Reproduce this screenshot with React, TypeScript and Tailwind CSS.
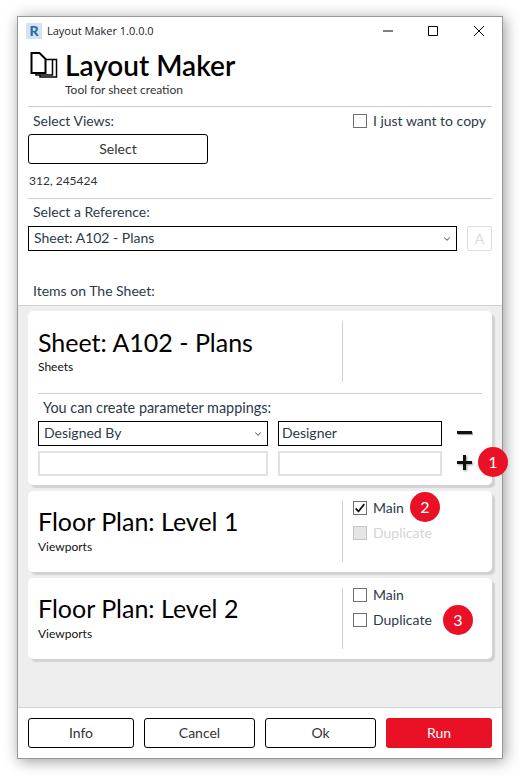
import { ChevronDown } from "lucide-react";

const font = { fontFamily: "Lato, 'Liberation Sans', sans-serif" };

function Checkbox({ label, checked, disabled }: { label: string; checked?: boolean; disabled?: boolean }) {
  return (
    <div className={`flex items-center gap-[6px] text-sm leading-[18px] ${disabled ? "text-[#d4d4d4]" : "text-[#2b3a4a]"}`}>
      <span
        className={`flex h-[14px] w-[14px] items-center justify-center border ${
          disabled ? "border-[#c4c4c4] bg-[#e6e6e6]" : "border-[#707070] bg-white"
        }`}
      >
        {checked && (
          <svg viewBox="0 0 14 14" className="h-[12px] w-[12px]">
            <path d="M2 7.500 5.200 11 12 2.500" fill="none" stroke="#111" strokeWidth="2" />
          </svg>
        )}
      </span>
      <span>{label}</span>
    </div>
  );
}

function Dropdown({ label, className }: { label: string; className: string }) {
  return (
    <div className={`flex h-[25px] items-center justify-between border-[1.5px] border-black pl-[5px] pr-[4px] text-sm text-[#2b3a4a] ${className}`}>
      <span className="pb-[2px]">{label}</span>
      <ChevronDown className="h-[10px] w-[10px] text-[#666]" strokeWidth={2.5} />
    </div>
  );
}

function Badge({ n, className }: { n: number; className: string }) {
  return (
    <span className={`absolute flex h-[30px] w-[30px] items-center justify-center rounded-full bg-[#ea1126] text-base text-white ${className}`}>
      {n}
    </span>
  );
}

function FooterButton({ label, className }: { label: string; className: string }) {
  return (
    <button className={`h-[30px] rounded-[3px] border border-black text-sm text-[#333] ${className}`}>{label}</button>
  );
}

function ViewCard({ title, children }: { title: string; children: React.ReactNode }) {
  return (
    <div className="relative flex h-[81px] rounded-[5px] bg-white shadow-[3px_3px_1px_#d2d2d2]">
      <div className="w-[314px] pl-[10px] pt-[14px]">
        <div className="text-[25px] leading-[32px] text-black">{title}</div>
        <div className="mt-[2px] text-xs leading-[16px] text-[#111]">Viewports</div>
      </div>
      <div className="my-[10px] w-px bg-[#cfcfcf]" />
      <div className="flex flex-col gap-[7px] pl-[10px] pt-[8px]">{children}</div>
    </div>
  );
}

export default function App() {
  return (
    <div className="h-[776px] w-[520px] bg-white pl-[17px] pt-[16px]" style={font}>
      <div className="flex h-[743px] w-[486px] flex-col border border-[#979797] bg-white shadow-[2px_2px_14px_rgba(0,0,0,0.4)]">
        {/* title bar */}
        <div className="flex h-[28px] shrink-0 items-center pl-[8px]">
          <span className="flex h-[16px] w-[16px] items-center justify-center bg-[#d5e3f1] text-sm font-black leading-none text-[#2a6aa8]">R</span>
          <span className="ml-[5px] text-[11px] text-[#222]" style={{ fontFamily: "'Open Sans', sans-serif" }}>Layout Maker 1.0.0.0</span>
          <div className="ml-auto flex items-center pr-[18px]">
            <svg viewBox="0 0 10 10" className="mr-[35px] h-[10px] w-[10px]"><path d="M0 5h10" stroke="#000" strokeWidth="1" /></svg>
            <svg viewBox="0 0 10 10" className="mr-[36px] h-[10px] w-[10px]"><path d="M.5.5h9v9h-9z" fill="none" stroke="#000" strokeWidth="1" /></svg>
            <svg viewBox="0 0 10 10" className="h-[10px] w-[10px]"><path d="M0 0l10 10M10 0 0 10" stroke="#000" strokeWidth="1" /></svg>
          </div>
        </div>

        {/* header */}
        <div className="flex shrink-0 pl-[12px] pt-[3px]">
          <svg viewBox="0 0 28 28" className="mt-[3px] h-[28px] w-[28px]" fill="none" stroke="#000" strokeWidth="1.500">
            <path d="M22.500 8.500h4V26H10v-2" />
            <path d="M15.500 8.500h7V24H6v-2" />
            <path d="M1.500 2h8l6 6v14h-14z" strokeWidth="2" />
          </svg>
          <div className="ml-[7px]">
            <div className="text-[28px] font-semibold leading-[34px] text-black">Layout Maker</div>
            <div className="text-xs leading-[15px] text-[#333]">Tool for sheet creation</div>
          </div>
        </div>

        <div className="mx-[10px] mt-[9px] h-px shrink-0 bg-[#cfcfcf]" />

        {/* select views */}
        <div className="flex shrink-0 items-start justify-between pl-[15px] pr-[16px] pt-[5px]">
          <span className="text-sm leading-[18px] text-[#2b3a4a]">Select Views:</span>
          <Checkbox label="I just want to copy" />
        </div>
        <button className="ml-[10px] mt-[4px] h-[30px] w-[180px] shrink-0 rounded-[3px] border border-black text-sm text-[#333]">Select</button>
        <div className="ml-[11px] mt-[9px] shrink-0 text-xs leading-[16px] text-[#333]">312, 245424</div>
        <div className="mx-[10px] mt-[9px] h-px shrink-0 bg-[#cfcfcf]" />

        {/* reference */}
        <div className="ml-[15px] mt-[4px] shrink-0 text-sm leading-[18px] text-[#2b3a4a]">Select a Reference:</div>
        <div className="mx-[10px] mt-[5px] flex shrink-0 items-center gap-[10px]">
          <Dropdown label="Sheet: A102 - Plans" className="w-[429px]" />
          <span className="flex h-[25px] w-[25px] items-center justify-center rounded-[2px] border border-[#dedede] text-sm text-[#dcdcdc]">A</span>
        </div>
        <div className="ml-[15px] mt-[31px] shrink-0 text-sm leading-[18px] text-[#2b3a4a]">Items on The Sheet:</div>

        {/* items */}
        <div className="mt-[5px] flex flex-1 flex-col gap-[6px] border-y border-[#d2d2d2] bg-[#eeeeee] px-[10px] pt-[5px]">
          <div className="relative h-[174px] shrink-0 rounded-[5px] bg-white shadow-[3px_3px_1px_#d2d2d2]">
            <div className="flex h-[71px] pt-[10px]">
              <div className="w-[314px] pl-[10px] pt-[5px]">
                <div className="text-[25px] leading-[32px] text-black">Sheet: A102 - Plans</div>
                <div className="mt-[1px] text-xs leading-[16px] text-[#111]">Sheets</div>
              </div>
              <div className="w-px bg-[#cfcfcf]" />
            </div>
            <div className="mx-[10px] mt-[11px] h-px bg-[#cfcfcf]" />
            <div className="ml-[15px] mt-[5px] text-[14.4px] leading-[18px] text-[#2b3a4a]">You can create parameter mappings:</div>
            <div className="ml-[10px] mt-[4px] grid grid-cols-[230px_164px_auto] gap-x-[10px] gap-y-[5px]">
              <Dropdown label="Designed By" className="w-[230px]" />
              <div className="flex h-[25px] items-center border-[1.5px] border-black pb-[2px] pl-[3px] text-sm text-[#2b3a4a]">Designer</div>
              <span className="flex h-[25px] w-[24px] items-center justify-center pb-[2px]">
                <span className="h-[3px] w-[15px] bg-[#111] shadow-[1px_1px_1px_#999]" />
              </span>
              <div className="h-[25px] border-2 border-[#e2e2e2]" />
              <div className="h-[25px] border-2 border-[#e2e2e2]" />
              <span className="flex h-[25px] w-[24px] items-center justify-center pb-[2px]">
                <svg viewBox="0 0 15 15" className="h-[15px] w-[15px] drop-shadow-[1px_1px_1px_#999]"><path d="M7.500 0v15M0 7.500h15" stroke="#111" strokeWidth="3" /></svg>
              </span>
            </div>
            <Badge n={1} className="left-[450px] top-[136px]" />
          </div>

          <ViewCard title="Floor Plan: Level 1">
            <Checkbox label="Main" checked />
            <Checkbox label="Duplicate" disabled />
            <Badge n={2} className="left-[382px] top-[1px]" />
          </ViewCard>

          <ViewCard title="Floor Plan: Level 2">
            <Checkbox label="Main" />
            <Checkbox label="Duplicate" />
            <Badge n={3} className="left-[415px] top-[27px]" />
          </ViewCard>
        </div>

        {/* footer */}
        <div className="flex h-[50px] shrink-0 items-center gap-[10px] px-[10px]">
          <FooterButton label="Info" className="w-[106px]" />
          <FooterButton label="Cancel" className="w-[111px]" />
          <FooterButton label="Ok" className="w-[111px]" />
          <button className="h-[30px] w-[106px] rounded-[3px] bg-[#ea1126] text-sm text-white">Run</button>
        </div>
      </div>
    </div>
  );
}
